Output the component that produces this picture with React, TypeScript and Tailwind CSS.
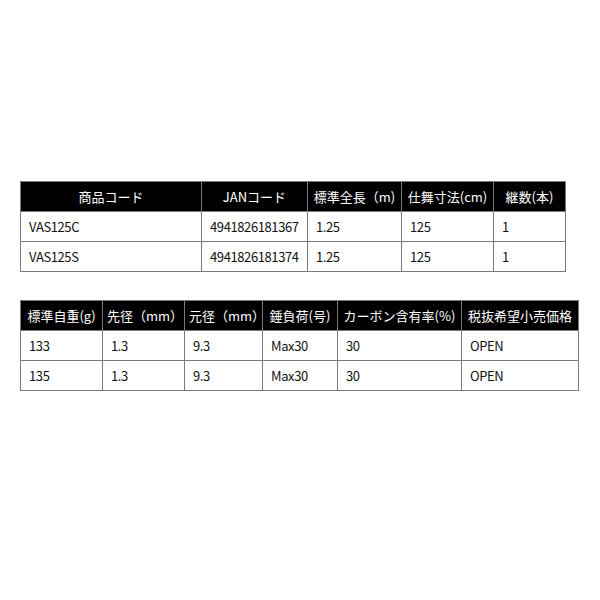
import React from "react";

const t1Cols = [181, 106, 94, 92, 72];
const t1Head = ["商品コード", "JANコード", "標準全長（m)", "仕舞寸法(cm)", "継数(本)"];
const t1Rows = [
  ["VAS125C", "4941826181367", "1.25", "125", "1"],
  ["VAS125S", "4941826181374", "1.25", "125", "1"],
];

const t2Cols = [82, 82, 78, 75, 124, 117];
const t2Head = ["標準自重(g)", "先径（mm）", "元径（mm）", "錘負荷(号)", "カーボン含有率(%)", "税抜希望小売価格"];
const t2Rows = [
  ["133", "1.3", "9.3", "Max30", "30", "OPEN"],
  ["135", "1.3", "9.3", "Max30", "30", "OPEN"],
];

function Table({ cols, head, rows }: { cols: number[]; head: string[]; rows: string[][] }) {
  const total = cols.reduce((a, b) => a + b, 0);
  return (
    <table className="table-fixed border-collapse" style={{ width: total + 1 }}>
      <colgroup>
        {cols.map((w, i) => (
          <col key={i} style={{ width: w }} />
        ))}
      </colgroup>
      <thead>
        <tr className="h-[30px]">
          {head.map((h, i) => (
            <th
              key={i}
              className="border border-[#7a7a7a] bg-black text-white font-normal text-center px-[4px] whitespace-nowrap"
            >
              {h}
            </th>
          ))}
        </tr>
      </thead>
      <tbody>
        {rows.map((r, ri) => (
          <tr key={ri} className="h-[30px]">
            {r.map((c, ci) => (
              <td key={ci} className="border border-[#7a7a7a] text-left pl-[8px] text-[#111] tracking-[-0.4px]">
                {c}
              </td>
            ))}
          </tr>
        ))}
      </tbody>
    </table>
  );
}

export default function App() {
  return (
    <div
      className="w-[600px] h-[600px] bg-white pt-[181px] pl-[20px] flex flex-col gap-[28px] text-[13px] leading-[18px]"
      style={{ fontFamily: '"Noto Sans CJK JP", "Noto Sans", sans-serif' }}
    >
      <Table cols={t1Cols} head={t1Head} rows={t1Rows} />
      <Table cols={t2Cols} head={t2Head} rows={t2Rows} />
    </div>
  );
}
